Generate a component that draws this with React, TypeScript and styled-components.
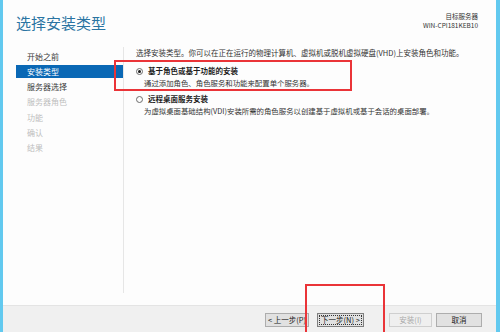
import React from "react";
import styled, { createGlobalStyle } from "styled-components";

const Global = createGlobalStyle`
  html, body { margin: 0; padding: 0; overflow: hidden; }
  body { font-family: "Noto Sans CJK SC", "Noto Sans", sans-serif; }
`;

const Window = styled.div`
  position: relative;
  width: 500px;
  height: 332px;
  display: flex;
  background: #fdfdfd;
  overflow: hidden;
`;

const EdgeStrip = styled.div<{ $w: number }>`
  width: ${(p) => p.$w}px;
  flex: none;
  background: #62c9ef;
`;

const Main = styled.div`
  flex: 1;
  display: flex;
  flex-direction: column;
  min-width: 0;
`;

const Header = styled.div`
  height: 47px;
  flex: none;
  display: flex;
  justify-content: space-between;
  align-items: flex-start;
  padding: 0 18px 0 13px;
  box-sizing: border-box;
`;

const Title = styled.h1`
  margin: 12px 0 0;
  font-size: 15px;
  line-height: 22px;
  font-weight: 400;
  color: #2a74a2;
`;

const Target = styled.div`
  margin-top: 12px;
  text-align: right;
  font-size: 6.5px;
  line-height: 9px;
  color: #333;
`;

const Body = styled.div`
  flex: 1;
  display: flex;
  min-height: 0;
`;

const Nav = styled.ul`
  list-style: none;
  margin: 0 0 12px;
  padding: 2.5px 0 0 13px;
  width: 121px;
  box-sizing: border-box;
  border-right: 1px solid #e6e6e6;
`;

const NavItem = styled.li<{ $state: "done" | "active" | "todo" }>`
  height: 13px;
  margin-bottom: 2.3px;
  padding-left: 11px;
  font-size: 8px;
  line-height: 13px;
  background: ${(p) => (p.$state === "active" ? "#0a68b5" : "transparent")};
  color: ${(p) =>
    p.$state === "active" ? "#ffffff" : p.$state === "done" ? "#3a3a3a" : "#bdbdbd"};
`;

const Content = styled.div`
  flex: 1;
  padding: 1px 0 0 12px;
  color: #333;
  font-size: 7.5px;
`;

const Intro = styled.p`
  margin: 0;
  line-height: 10px;
`;

const Option = styled.div<{ $top: number }>`
  margin-top: ${(p) => p.$top}px;
  display: grid;
  grid-template-columns: 12px 1fr;
`;

const Radio = styled.span<{ $checked?: boolean }>`
  margin-top: 1.5px;
  width: 7px;
  height: 7px;
  border-radius: 50%;
  border: 1px solid #6b6b6b;
  box-sizing: border-box;
  display: flex;
  align-items: center;
  justify-content: center;
  &::after {
    content: "";
    width: 3px;
    height: 3px;
    border-radius: 50%;
    background: ${(p) => (p.$checked ? "#1a1a1a" : "transparent")};
  }
`;

const OptionLabel = styled.div`
  font-weight: 700;
  line-height: 10px;
  color: #1e1e1e;
`;

const OptionDesc = styled.div`
  grid-column: 1 / span 2;
  padding-left: 8px;
  margin-top: 2px;
  line-height: 10px;
  font-size: 7.4px;
  color: #333;
`;

const Footer = styled.div`
  height: 27px;
  flex: none;
  box-sizing: border-box;
  background: #f0f0f0;
  border-top: 1px solid #e4e4e4;
  display: flex;
  justify-content: flex-end;
  align-items: center;
  padding: 1px 14px 0 0;
`;

const Button = styled.button<{ $w: number; $gap: number; $focus?: boolean }>`
  margin-left: ${(p) => p.$gap}px;
  width: ${(p) => p.$w}px;
  height: 14px;
  padding: 0;
  box-sizing: border-box;
  font-family: "Noto Sans CJK SC", sans-serif;
  font-size: 7.5px;
  line-height: 12px;
  color: #222;
  background: #e1e1e1;
  border: 1px solid ${(p) => (p.$focus ? "#7f7f7f" : "#adadad")};
  outline: ${(p) => (p.$focus ? "1px dotted #333" : "none")};
  outline-offset: -3px;
  &:disabled {
    color: #a8a8a8;
    background: #efefef;
    border-color: #cfcfcf;
  }
`;

const Highlight = styled.div<{ $l: number; $t: number; $w: number; $h: number }>`
  position: absolute;
  left: ${(p) => p.$l}px;
  top: ${(p) => p.$t}px;
  width: ${(p) => p.$w}px;
  height: ${(p) => p.$h}px;
  border: 2px solid #ea3438;
  box-sizing: border-box;
  pointer-events: none;
`;

const steps: { label: string; state: "done" | "active" | "todo" }[] = [
  { label: "开始之前", state: "done" },
  { label: "安装类型", state: "active" },
  { label: "服务器选择", state: "done" },
  { label: "服务器角色", state: "todo" },
  { label: "功能", state: "todo" },
  { label: "确认", state: "todo" },
  { label: "结果", state: "todo" },
];

export default function App() {
  return (
    <>
      <Global />
      <Window>
        <EdgeStrip $w={3} />
        <Main>
          <Header>
            <Title>选择安装类型</Title>
            <Target>
              <div>目标服务器</div>
              <div>WIN-CPI181KEB10</div>
            </Target>
          </Header>
          <Body>
            <Nav>
              {steps.map((s) => (
                <NavItem key={s.label} $state={s.state}>
                  {s.label}
                </NavItem>
              ))}
            </Nav>
            <Content>
              <Intro>
                选择安装类型。你可以在正在运行的物理计算机、虚拟机或脱机虚拟硬盘(VHD)上安装角色和功能。
              </Intro>
              <Option $top={8}>
                <Radio $checked />
                <OptionLabel>基于角色或基于功能的安装</OptionLabel>
                <OptionDesc>通过添加角色、角色服务和功能来配置单个服务器。</OptionDesc>
              </Option>
              <Option $top={6}>
                <Radio />
                <OptionLabel>远程桌面服务安装</OptionLabel>
                <OptionDesc>
                  为虚拟桌面基础结构(VDI)安装所需的角色服务以创建基于虚拟机或基于会话的桌面部署。
                </OptionDesc>
              </Option>
            </Content>
          </Body>
          <Footer>
            <Button $w={44} $gap={0}>&lt; 上一步(P)</Button>
            <Button $w={47} $gap={8} $focus>下一步(N) &gt;</Button>
            <Button $w={43} $gap={25} disabled>安装(I)</Button>
            <Button $w={46} $gap={4}>取消</Button>
          </Footer>
        </Main>
        <EdgeStrip $w={4} />
        <Highlight $l={114} $t={60} $w={238} $h={31} />
        <Highlight $l={305} $t={284} $w={80} $h={60} />
      </Window>
    </>
  );
}
